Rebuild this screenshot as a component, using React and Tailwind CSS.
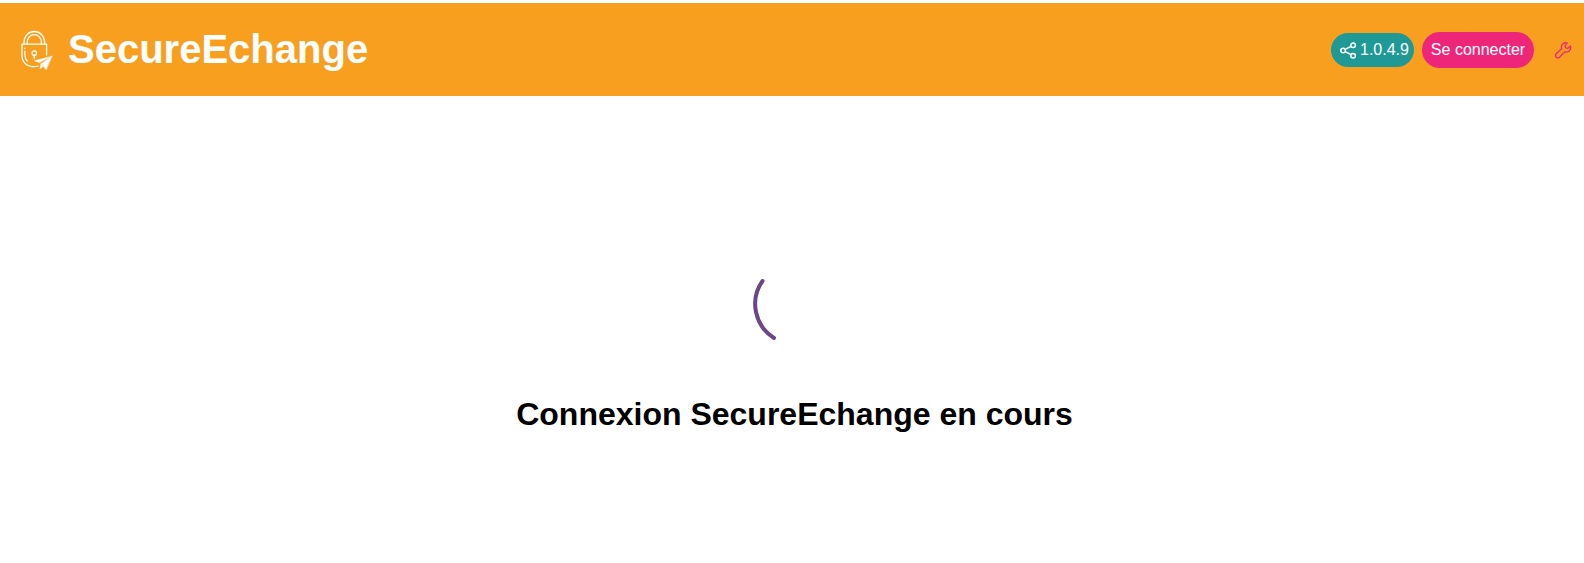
function LockLogo() {
  return (
    <svg className="h-[42px] w-8 shrink-0" viewBox="0 0 32 42" fill="none" stroke="#fff" strokeWidth="1.3" strokeLinecap="round" strokeLinejoin="round">
      <path d="M3 14.2V12.2A10.3 10.7 0 0 1 23.6 12.2V14.2" />
      <path d="M6.2 14.2V12.2A7.1 7.6 0 0 1 20.4 12.2V14.2" />
      <path d="M25.6 25V14.2H1V25.5C1 32.5 6 36.7 13.3 36.7Q15.5 36.7 17 36" />
      <path d="M3.9 18V18.6M3.9 21V25.5Q4 28.6 6.2 31" strokeWidth="1.2" />
      <circle cx="13.3" cy="23" r="2.2" />
      <path d="M13.3 25.5V28.3" strokeWidth="1.6" />
      <path d="M31 26.2L13.2 30.7L18.2 32.6Z" fill="#fff" strokeWidth="0.4" />
      <path d="M31 26.2L20.6 33.4L25 39.8Z" fill="#fff" strokeWidth="0.4" />
      <path d="M20 33.6L18.8 39L22.2 36.6Z" fill="#fff" strokeWidth="0.4" />
    </svg>
  );
}

function ShareIcon() {
  return (
    <svg className="size-[17px] shrink-0" viewBox="0 0 17 17" fill="none" stroke="#fff" strokeWidth="1.5">
      <circle cx="3.1" cy="8.5" r="2.3" />
      <circle cx="13.1" cy="3.3" r="2.3" />
      <circle cx="13.1" cy="13.7" r="2.3" />
      <path d="M5.2 7.4L11 4.4M5.2 9.6L11 12.6" />
    </svg>
  );
}

function WrenchIcon() {
  return (
    <svg className="size-[17px] shrink-0" viewBox="0 0 17 17" fill="none" stroke="#ee2679" strokeWidth="1.3" strokeLinejoin="round">
      <path d="M12.2 1.1C9.8 0.1 6.8 1.6 6.4 4.2C6.3 5.1 6.4 5.8 6.6 6.7L1.3 11.8C0.4 12.8 0.4 14.3 1.3 15.2C2.3 16.2 3.7 16.1 4.6 15.2L9.7 9.9C11.9 10.6 14.1 9.6 15.2 7.6C15.9 6.3 15.9 5.1 15.4 4L13 6.3L10.7 5.8L10.1 3.4Z" />
    </svg>
  );
}

function Spinner() {
  return (
    <svg className="size-[100px]" viewBox="0 0 100 100" fill="none" stroke="#6c4686" strokeWidth="4" strokeLinecap="round">
      <path d="M17.5 28A40 40 0 0 0 29 85" />
    </svg>
  );
}

export default function App() {
  return (
    <div className="flex h-[563px] w-full flex-col bg-white pt-[3px] font-['Liberation_Sans',Arial,sans-serif] text-base">
      <header className="flex h-[93px] items-start justify-between bg-[#f99f20] pr-3 pl-[21px]">
        <div className="flex items-start">
          <div className="pt-[27px]"><LockLogo /></div>
          <h1 className="ml-[15px] pt-[23px] text-[40px] leading-[46px] font-bold text-white">SecureEchange</h1>
        </div>
        <div className="flex h-9 items-center mt-[29px]">
          <span className="flex h-[34px] w-[83px] items-center gap-[3px] rounded-full bg-[#1f9995] pl-[9px] text-white">
            <ShareIcon />
            <span className="leading-[18px]">1.0.4.9</span>
          </span>
          <button className="ml-2 h-9 w-28 rounded-full bg-[#ee2679] text-center leading-[18px] whitespace-nowrap text-white">Se connecter</button>
          <button className="ml-[21px]" aria-label="Configuration"><WrenchIcon /></button>
        </div>
      </header>
      <main className="flex flex-col items-center pt-[157px] pl-[5px]">
        <Spinner />
        <h2 className="mt-[43px] text-[32px] leading-9 font-bold text-black">Connexion SecureEchange en cours</h2>
      </main>
    </div>
  );
}
